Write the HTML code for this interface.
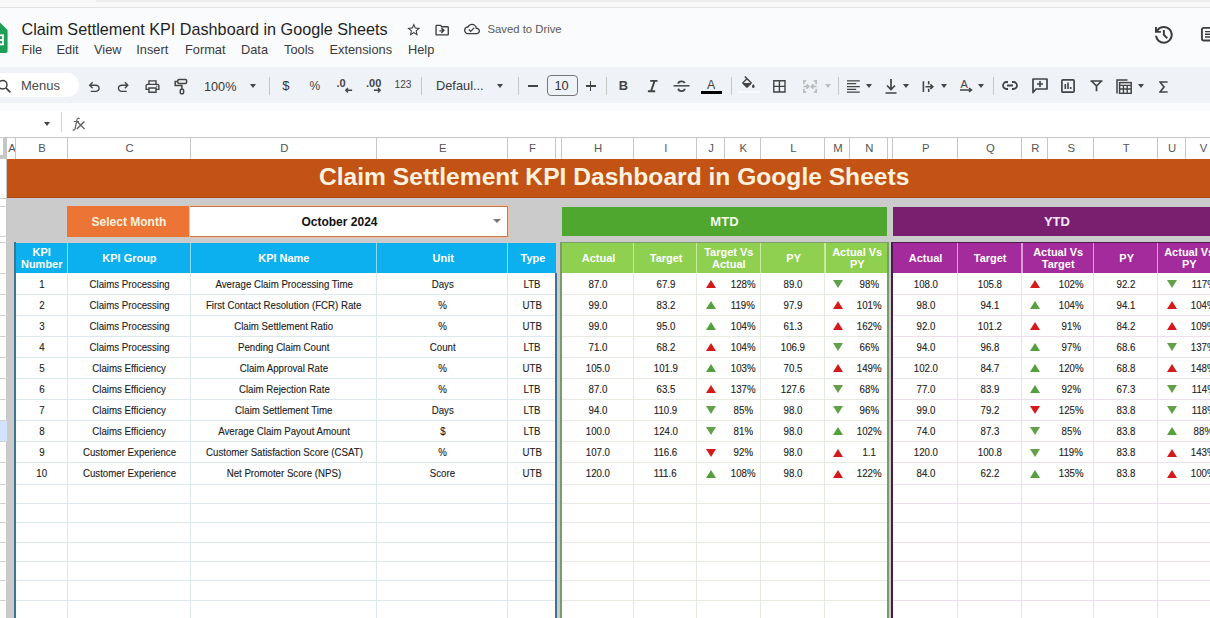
<!DOCTYPE html>
<html><head><meta charset="utf-8"><style>
*{margin:0;padding:0;box-sizing:border-box}
html,body{width:1210px;height:618px;overflow:hidden;background:#f9fbfd;font-family:"Liberation Sans",sans-serif;}
#root{position:relative;width:1210px;height:618px;overflow:hidden}
.t{position:absolute;white-space:nowrap;line-height:1}
.c{display:flex;align-items:center;justify-content:center;text-align:center;white-space:nowrap;overflow:hidden}
.d{font-size:10.3px;color:#1c1c1c;padding-top:1px;padding-left:1.2px;-webkit-text-stroke:0.12px #1c1c1c}
.d span,.h span,.s span{display:inline-block;transform:scaleX(0.94)}
.h span{transform:scaleX(0.955)}
.h{font-size:11.5px;font-weight:bold;color:#fff;line-height:1.0;padding-top:1.5px;padding-left:1.5px}
.ic{position:absolute}
</style></head>
<body><div id="root">
<!-- top strip -->
<div style="position:absolute;left:0;top:0;width:1210px;height:7px;background:#f8f8f8"></div><div style="position:absolute;left:96px;top:0;width:1114px;height:1.5px;background:#ededed"></div>
<div style="position:absolute;left:0;top:6.5px;width:1210px;height:1px;background:#e3e3e3"></div>
<!-- sheets logo -->
<svg style="position:absolute;left:-15px;top:22.3px" width="23" height="31" viewBox="0 0 23 31">
  <path d="M0 2a2 2 0 0 1 2-2H14.6L22.6 8V29a2 2 0 0 1-2 2H2a2 2 0 0 1-2-2z" fill="#1d9f58"/>
  <rect x="7" y="13.3" width="10.9" height="9.1" fill="none" stroke="#fff" stroke-width="1.9"/>
  <path d="M7 18h10.9" stroke="#fff" stroke-width="1.8"/>
</svg>
<div class="t" style="left:21.5px;top:21px;font-size:16.2px;color:#1f1f1f">Claim Settlement KPI Dashboard in Google Sheets</div>
<!-- star -->
<svg style="position:absolute;left:405.8px;top:21.5px" width="15.6" height="15.6" viewBox="0 0 24 24"><path fill="#3c3c3c" d="M22 9.24l-7.190-.62L12 2 9.19 8.63 2 9.24l5.46 4.73L5.82 21 12 17.27 18.18 21l-1.63-7.03L22 9.24zM12 15.4l-3.76 2.27 1-4.28-3.32-2.880 4.38-.38L12 6.1l1.71 4.04 4.38.38-3.32 2.88 1 4.28L12 15.4z"/></svg>
<svg style="position:absolute;left:433.9px;top:21.6px" width="16.3" height="16.3" viewBox="0 0 24 24"><path fill="#3c3c3c" d="M20 6h-8l-2-2H4c-1.1 0-1.990.9-1.99 2L2 18c0 1.1.9 2 2 2h16c1.1 0 2-.9 2-2V8c0-1.1-.9-2-2-2zm0 12H4V6h5.17l2 2H20v10zm-8.16-6H8v2h3.84l-1.59 1.59L11.660 17 16 12.01 11.66 8l-1.41 1.41L11.84 12z"/></svg>
<svg style="position:absolute;left:464px;top:21.3px" width="16" height="16" viewBox="0 0 24 24"><path fill="#3c3c3c" d="M19.35 10.04C18.67 6.59 15.64 4 12 4 9.11 4 6.6 5.64 5.35 8.04 2.34 8.36 0 10.91 0 14c0 3.31 2.69 6 6 6h13c2.76 0 5-2.24 5-5 0-2.64-2.05-4.78-4.65-4.96zM19 18H6c-2.21 0-4-1.79-4-4 0-2.05 1.53-3.76 3.560-3.97l1.07-.11.5-.95C8.08 7.14 9.94 6 12 6c2.62 0 4.88 1.86 5.390 4.43l.3 1.5 1.53.11c1.56.1 2.78 1.41 2.78 2.96 0 1.65-1.35 3-3 3zm-9-3.82l-2.09-2.09L6.5 13.5 10 17l6.01-6.01-1.41-1.41z"/></svg>
<div class="t" style="left:487.5px;top:23.5px;font-size:11.3px;color:#5a5a5a">Saved to Drive</div>
<!-- history -->
<svg style="position:absolute;left:1152.1px;top:23.2px" width="23.7" height="23.7" viewBox="0 -960 960 960"><path fill="#3c3c3c" d="M480-120q-138 0-240.5-91.5T122-440h82q14 104 92.5 172T480-200q117 0 198.5-81.5T760-480q0-117-81.5-198.5T480-760q-69 0-129 32t-101 88h110v80H120v-240h80v94q51-64 124.5-99T480-840q75 0 140.5 28.5t114 77q48.5 48.5 77 114T840-480q0 75-28.5 140.5t-77 114q-48.5 48.5-114 77T480-120Zm112-192L440-464v-216h80v184l128 128-56 56Z"/></svg>
<svg style="position:absolute;left:1199.5px;top:26px" width="20" height="16" viewBox="0 0 20 16"><rect x="1.9" y="1.9" width="16" height="12.6" rx="1.8" fill="none" stroke="#3c3c3c" stroke-width="1.9"/><path d="M5 5.6h10M5 8.3h10M5 11h10" stroke="#3c3c3c" stroke-width="1.4"/></svg>
<!-- menu -->
<div class="t" style="left:21.5px;top:44.2px;font-size:12.8px;color:#3a3a3a">File</div>
<div class="t" style="left:56.5px;top:44.2px;font-size:12.8px;color:#3a3a3a">Edit</div>
<div class="t" style="left:94px;top:44.2px;font-size:12.8px;color:#3a3a3a">View</div>
<div class="t" style="left:136.3px;top:44.2px;font-size:12.8px;color:#3a3a3a">Insert</div>
<div class="t" style="left:185px;top:44.2px;font-size:12.8px;color:#3a3a3a">Format</div>
<div class="t" style="left:241px;top:44.2px;font-size:12.8px;color:#3a3a3a">Data</div>
<div class="t" style="left:284px;top:44.2px;font-size:12.8px;color:#3a3a3a">Tools</div>
<div class="t" style="left:329.5px;top:44.2px;font-size:12.8px;color:#3a3a3a">Extensions</div>
<div class="t" style="left:408px;top:44.2px;font-size:12.8px;color:#3a3a3a">Help</div>

<!-- toolbar -->
<div style="position:absolute;left:-20px;top:67.4px;width:1250px;height:36px;background:#eff2f7;border-radius:18px"></div>
<div style="position:absolute;left:-30px;top:73px;width:109px;height:24px;background:#fff;border-radius:12px"></div>
<svg style="position:absolute;left:-4.5px;top:77.5px" width="17" height="17" viewBox="0 0 24 24"><circle cx="9.5" cy="9.5" r="6" fill="none" stroke="#3c3c3c" stroke-width="2"/><path d="M14 14l6.3 6.3" stroke="#3c3c3c" stroke-width="2.2"/></svg>
<div class="t" style="left:20.9px;top:79px;font-size:13px;color:#4a4a4a">Menus</div>
<!-- undo / redo -->
<svg style="position:absolute;left:86.3px;top:79.2px" width="16.5" height="16.5" viewBox="0 -960 960 960"><path fill="#444" d="M280-200v-80h284q63 0 109.5-40T720-420q0-60-46.5-100T564-560H312l104 104-56 56-200-200 200-200 56 56-104 104h252q97 0 166.5 63T800-420q0 94-69.5 157T564-200H280Z"/></svg>
<svg style="position:absolute;left:115.2px;top:79.2px" width="16.5" height="16.5" viewBox="0 -960 960 960"><path fill="#444" d="M396-200q-97 0-166.5-63T160-420q0-94 69.5-157T396-640h252L544-744l56-56 200 200-200 200-56-56 104-104H396q-63 0-109.5 40T240-420q0 60 46.5 100T396-280h284v80H396Z"/></svg>
<!-- print -->
<svg style="position:absolute;left:143.5px;top:77.5px" width="17" height="17" viewBox="0 -960 960 960"><path fill="#444" d="M640-640v-120H320v120h-80v-200h480v200h-80Zm-480 80h640-640Zm560 100q17 0 28.5-11.5T760-500q0-17-11.5-28.5T720-540q-17 0-28.5 11.5T680-500q0 17 11.5 28.5T720-460Zm-80 260v-160H320v160h320Zm80 80H240v-160H80v-240q0-51 35-85.5t85-34.5h560q51 0 85.5 34.5T880-520v240H720v160Zm80-240v-160q0-17-11.5-28.5T760-560H200q-17 0-28.5 11.5T160-520v160h80v-80h480v80h80Z"/></svg>
<!-- paint format -->
<svg style="position:absolute;left:172px;top:77px" width="17" height="18" viewBox="172 77 17 18"><rect x="177.8" y="79.4" width="8.8" height="4" rx="1.2" fill="none" stroke="#444" stroke-width="1.5"/><path d="M177.8 81.4H175.2V85.5H181.9V89.3" fill="none" stroke="#444" stroke-width="1.5"/><rect x="180.3" y="89.3" width="3.3" height="4.4" rx="0.9" fill="none" stroke="#444" stroke-width="1.5"/></svg>
<div class="t" style="left:204px;top:80.6px;font-size:12.7px;color:#3a3a3a">100%</div>
<div class="t" style="left:249.5px;top:84px;width:0;height:0;border-left:3.5px solid transparent;border-right:3.5px solid transparent;border-top:4px solid #444"></div>
<div style="position:absolute;left:269px;top:77px;width:1px;height:18px;background:#c7c7c7"></div>
<div class="t" style="left:282.3px;top:79.3px;font-size:13px;color:#333">$</div>
<div class="t" style="left:309.5px;top:79.5px;font-size:12px;color:#444">%</div>
<div class="t" style="left:336.5px;top:77.5px;font-size:11px;font-weight:bold;color:#444">.0</div>
<svg style="position:absolute;left:343.5px;top:87px" width="9" height="6.5" viewBox="0 0 10 7"><path d="M9 3.5H2M4.5 1L2 3.5 4.5 6" fill="none" stroke="#444" stroke-width="1.6"/></svg>
<div class="t" style="left:366px;top:77.5px;font-size:11px;font-weight:bold;color:#444">.00</div>
<svg style="position:absolute;left:372.5px;top:87px" width="9" height="6.5" viewBox="0 0 10 7"><path d="M1 3.5h7M5.5 1L8 3.5 5.5 6" fill="none" stroke="#444" stroke-width="1.6"/></svg>
<div class="t" style="left:394.5px;top:79.8px;font-size:10.2px;color:#444">123</div>
<div style="position:absolute;left:421px;top:77px;width:1px;height:18px;background:#c7c7c7"></div>
<div class="t" style="left:436px;top:79.5px;font-size:12.8px;color:#3a3a3a">Defaul...</div>
<div class="t" style="left:496.5px;top:84px;width:0;height:0;border-left:3.5px solid transparent;border-right:3.5px solid transparent;border-top:4px solid #444"></div>
<div style="position:absolute;left:517.5px;top:77px;width:1px;height:18px;background:#c7c7c7"></div>
<div style="position:absolute;left:527.5px;top:85.2px;width:10px;height:1.4px;background:#444"></div>
<div style="position:absolute;left:546.8px;top:74.5px;width:31px;height:21.5px;border:1.2px solid #777;border-radius:4px"></div>
<div class="t" style="left:554.5px;top:79.5px;font-size:12.8px;color:#333">10</div>
<div style="position:absolute;left:585.5px;top:85.2px;width:10.5px;height:1.4px;background:#444"></div>
<div style="position:absolute;left:590px;top:80.6px;width:1.4px;height:10.5px;background:#444"></div>
<div style="position:absolute;left:606px;top:77px;width:1px;height:18px;background:#c7c7c7"></div>
<div class="t" style="left:618.8px;top:79.5px;font-size:12.8px;font-weight:bold;color:#444">B</div>
<svg style="position:absolute;left:646px;top:79px" width="13" height="14" viewBox="0 0 13 14"><path d="M4.2 1.9h7.3M1.9 12.3h7.3M8.6 1.9L5 12.3" fill="none" stroke="#444" stroke-width="1.9"/></svg>
<svg style="position:absolute;left:673px;top:79.5px" width="17" height="13" viewBox="0 0 17 13"><path d="M0.5 5.8h16" stroke="#444" stroke-width="1.5"/><path d="M5.2 3.6C5.5 0.6 11.2 0.6 11.6 3.2M5.3 8.6c0.4 3.2 6.2 3.4 6.4 0.2" fill="none" stroke="#444" stroke-width="1.8"/></svg>
<div class="t" style="left:707px;top:78.5px;font-size:12.3px;color:#444">A</div>
<div style="position:absolute;left:701px;top:91px;width:21px;height:3px;background:#000"></div>
<div style="position:absolute;left:730.5px;top:77px;width:1px;height:18px;background:#c7c7c7"></div>
<svg style="position:absolute;left:739.7px;top:75.5px" width="16.8" height="16.8" viewBox="0 0 24 24"><path fill="#444" d="M16.56 8.94L7.62 0 6.21 1.41l2.38 2.38-5.150 5.15c-.59.59-.59 1.54 0 2.12l5.5 5.5c.29.29.68.44 1.06.44s.77-.15 1.06-.44l5.5-5.5c.59-.58.59-1.53 0-2.12zM5.21 10L10 5.21 14.79 10H5.21zM19 11.5s-2 2.17-2 3.5c0 1.1.9 2 2 2s2-.9 2-2c0-1.33-2-3.5-2-3.5z"/></svg>
<div style="position:absolute;left:738px;top:90.6px;width:22px;height:2.6px;background:#fafbfd"></div>
<svg style="position:absolute;left:770.8px;top:77.9px" width="16.8" height="16.8" viewBox="0 0 24 24"><path fill="#444" d="M3 3v18h18V3H3zm8 16H5v-6h6v6zm0-8H5V5h6v6zm8 8h-6v-6h6v6zm0-8h-6V5h6v6z"/></svg>
<svg style="position:absolute;left:802.6px;top:79.6px" width="14" height="13" viewBox="0 0 14 13"><path d="M0.9 0v4.2M0.9 8.8v4.2M0 0.9h3.2M0 12.1h3.2M13.1 0v4.2M13.1 8.8v4.2M10.8 0.9h3.2M10.8 12.1h3.2M0.5 6.5h5.2M3.6 4.4l2.1 2.1-2.1 2.1M13.5 6.5H8.3M10.4 4.4L8.3 6.5l2.1 2.1" fill="none" stroke="#b8b8b8" stroke-width="1.5"/></svg>
<div class="t" style="left:825px;top:84px;width:0;height:0;border-left:3.5px solid transparent;border-right:3.5px solid transparent;border-top:4px solid #bdbdbd"></div>
<div style="position:absolute;left:837.5px;top:77px;width:1px;height:18px;background:#c7c7c7"></div>
<svg style="position:absolute;left:847px;top:79.6px" width="13" height="13" viewBox="0 0 13 13"><path d="M0 0.8h12.8M0 3.7h9.2M0 6.5h12.8M0 9.3h9.2M0 12.2h12.8" stroke="#444" stroke-width="1.25"/></svg>
<div class="t" style="left:866px;top:84px;width:0;height:0;border-left:3.5px solid transparent;border-right:3.5px solid transparent;border-top:4px solid #444"></div>
<svg style="position:absolute;left:884.5px;top:78.5px" width="12" height="15" viewBox="0 0 12 15"><path d="M6 0v10M2 6.5L6 10.5 10 6.5M0.5 14h11" fill="none" stroke="#444" stroke-width="1.7"/></svg>
<div class="t" style="left:903.3px;top:84px;width:0;height:0;border-left:3.5px solid transparent;border-right:3.5px solid transparent;border-top:4px solid #444"></div>
<svg style="position:absolute;left:921.8px;top:80.6px" width="13" height="11.5" viewBox="0 0 13 11.5"><path d="M1.4 0.3v10.9M6.7 0v3.6M6.7 7.8v3.6M3.5 5.7h7.2M8.4 3.4l2.4 2.3-2.4 2.3" fill="none" stroke="#444" stroke-width="1.6"/></svg>
<div class="t" style="left:940.5px;top:84px;width:0;height:0;border-left:3.5px solid transparent;border-right:3.5px solid transparent;border-top:4px solid #444"></div>
<div class="t" style="left:960.5px;top:78.6px;font-size:11px;color:#444">A</div>
<svg style="position:absolute;left:960px;top:86.8px" width="13" height="6" viewBox="0 0 13 6"><path d="M0 3h11M9 1l2.5 2L9 5" fill="none" stroke="#444" stroke-width="1.5"/></svg>
<div class="t" style="left:977.7px;top:84px;width:0;height:0;border-left:3.5px solid transparent;border-right:3.5px solid transparent;border-top:4px solid #444"></div>
<div style="position:absolute;left:992.5px;top:77px;width:1px;height:18px;background:#c7c7c7"></div>
<svg style="position:absolute;left:1002px;top:80px" width="16" height="11" viewBox="0 0 16 11"><path d="M6 2H4.5a3.5 3.5 0 0 0 0 7H6M10 2h1.5a3.5 3.5 0 0 1 0 7H10M5 5.5h6" fill="none" stroke="#444" stroke-width="1.8"/></svg>
<svg style="position:absolute;left:1031.5px;top:78px" width="16" height="16" viewBox="0 0 16 16"><path d="M1 1h14v10H4l-3 3.5z" fill="none" stroke="#444" stroke-width="1.7" stroke-linejoin="round"/><path d="M8 3v6M5 6h6" stroke="#444" stroke-width="1.7"/></svg>
<svg style="position:absolute;left:1061px;top:79px" width="14" height="14" viewBox="0 0 14 14"><rect x="0.9" y="0.9" width="12.2" height="12.2" rx="1" fill="none" stroke="#444" stroke-width="1.7"/><path d="M4.3 5v5M7 3.5v6.5M9.7 8v2" stroke="#444" stroke-width="1.6"/></svg>
<svg style="position:absolute;left:1090.3px;top:80.3px" width="13" height="11.5" viewBox="0 0 13 11.5"><path d="M0.5 1h12M1.5 1l5 5M11.5 1l-5 5M6.5 5.5v5.8" fill="none" stroke="#444" stroke-width="1.7"/></svg>
<svg style="position:absolute;left:1116px;top:79px" width="16" height="15" viewBox="0 0 16 15"><path d="M1 14.5V1h10.5" fill="none" stroke="#444" stroke-width="1.5"/><rect x="3.6" y="3.6" width="11.6" height="10.8" fill="none" stroke="#444" stroke-width="1.5"/><path d="M3.6 6.4h11.6M3.6 10h11.6M7.4 6.4v8M11.2 6.4v8" stroke="#444" stroke-width="1.4"/></svg>
<div class="t" style="left:1137.7px;top:84px;width:0;height:0;border-left:3.5px solid transparent;border-right:3.5px solid transparent;border-top:4px solid #444"></div>
<svg style="position:absolute;left:1158.8px;top:80.6px" width="9" height="12" viewBox="0 0 9 12"><path d="M8.6 1H1l4 5-4 5h7.6" fill="none" stroke="#444" stroke-width="1.7"/></svg>

<!-- formula bar -->
<div style="position:absolute;left:0;top:111.3px;width:1210px;height:26px;background:#fff"></div>
<div class="t" style="left:43.8px;top:121.5px;width:0;height:0;border-left:3.5px solid transparent;border-right:3.5px solid transparent;border-top:4px solid #444"></div>
<div style="position:absolute;left:60.8px;top:112.3px;width:1px;height:19.5px;background:#d5d5d5"></div>
<svg style="position:absolute;left:71px;top:116.5px" width="15" height="14" viewBox="71 116.5 15 14"><path d="M79.6 118.3C78.6 117.3 77.4 117.6 77 119.2L75.1 128C74.7 129.6 73.6 130 72.6 129.3M73.8 121H79" fill="none" stroke="#606060" stroke-width="1.2"/><path d="M77.2 121L84.6 128.6M84.4 121L76.8 128.6" fill="none" stroke="#606060" stroke-width="1.35"/></svg>

<div style="position:absolute;left:0.0px;top:137.2px;width:1210.0px;height:480.8px;background:#fff"></div><div style="position:absolute;left:7.0px;top:158.6px;width:1203.0px;height:459.4px;background:#cbcbcb"></div><div style="position:absolute;left:0.0px;top:136.7px;width:1210.0px;height:1.0px;background:#c7c7c7"></div><div style="position:absolute;left:7.5px;top:137.7px;width:8.4px;height:20.9px;border-right:1px solid #c7c7c7;color:#555;font-size:11.3px"><div class="c" style="width:100%;height:100%;padding-left:1.5px;padding-top:0.5px">A</div></div><div style="position:absolute;left:15.9px;top:137.7px;width:52.0px;height:20.9px;border-right:1px solid #c7c7c7;color:#555;font-size:11.3px"><div class="c" style="width:100%;height:100%;padding-left:1.5px;padding-top:0.5px">B</div></div><div style="position:absolute;left:67.9px;top:137.7px;width:123.0px;height:20.9px;border-right:1px solid #c7c7c7;color:#555;font-size:11.3px"><div class="c" style="width:100%;height:100%;padding-left:1.5px;padding-top:0.5px">C</div></div><div style="position:absolute;left:190.9px;top:137.7px;width:186.3px;height:20.9px;border-right:1px solid #c7c7c7;color:#555;font-size:11.3px"><div class="c" style="width:100%;height:100%;padding-left:1.5px;padding-top:0.5px">D</div></div><div style="position:absolute;left:377.2px;top:137.7px;width:130.9px;height:20.9px;border-right:1px solid #c7c7c7;color:#555;font-size:11.3px"><div class="c" style="width:100%;height:100%;padding-left:1.5px;padding-top:0.5px">E</div></div><div style="position:absolute;left:508.1px;top:137.7px;width:48.4px;height:20.9px;border-right:1px solid #c7c7c7;color:#555;font-size:11.3px"><div class="c" style="width:100%;height:100%;padding-left:1.5px;padding-top:0.5px">F</div></div><div style="position:absolute;left:556.5px;top:137.7px;width:5.3px;height:20.9px;border-right:1px solid #c7c7c7;color:#555;font-size:11.3px"><div class="c" style="width:100%;height:100%;padding-left:1.5px;padding-top:0.5px"></div></div><div style="position:absolute;left:561.8px;top:137.7px;width:72.3px;height:20.9px;border-right:1px solid #c7c7c7;color:#555;font-size:11.3px"><div class="c" style="width:100%;height:100%;padding-left:1.5px;padding-top:0.5px">H</div></div><div style="position:absolute;left:634.1px;top:137.7px;width:62.8px;height:20.9px;border-right:1px solid #c7c7c7;color:#555;font-size:11.3px"><div class="c" style="width:100%;height:100%;padding-left:1.5px;padding-top:0.5px">I</div></div><div style="position:absolute;left:696.9px;top:137.7px;width:28.1px;height:20.9px;border-right:1px solid #c7c7c7;color:#555;font-size:11.3px"><div class="c" style="width:100%;height:100%;padding-left:1.5px;padding-top:0.5px">J</div></div><div style="position:absolute;left:725.0px;top:137.7px;width:35.9px;height:20.9px;border-right:1px solid #c7c7c7;color:#555;font-size:11.3px"><div class="c" style="width:100%;height:100%;padding-left:1.5px;padding-top:0.5px">K</div></div><div style="position:absolute;left:760.9px;top:137.7px;width:64.5px;height:20.9px;border-right:1px solid #c7c7c7;color:#555;font-size:11.3px"><div class="c" style="width:100%;height:100%;padding-left:1.5px;padding-top:0.5px">L</div></div><div style="position:absolute;left:825.4px;top:137.7px;width:24.6px;height:20.9px;border-right:1px solid #c7c7c7;color:#555;font-size:11.3px"><div class="c" style="width:100%;height:100%;padding-left:1.5px;padding-top:0.5px">M</div></div><div style="position:absolute;left:850.0px;top:137.7px;width:38.1px;height:20.9px;border-right:1px solid #c7c7c7;color:#555;font-size:11.3px"><div class="c" style="width:100%;height:100%;padding-left:1.5px;padding-top:0.5px">N</div></div><div style="position:absolute;left:888.1px;top:137.7px;width:4.8px;height:20.9px;border-right:1px solid #c7c7c7;color:#555;font-size:11.3px"><div class="c" style="width:100%;height:100%;padding-left:1.5px;padding-top:0.5px"></div></div><div style="position:absolute;left:892.9px;top:137.7px;width:65.2px;height:20.9px;border-right:1px solid #c7c7c7;color:#555;font-size:11.3px"><div class="c" style="width:100%;height:100%;padding-left:1.5px;padding-top:0.5px">P</div></div><div style="position:absolute;left:958.1px;top:137.7px;width:64.2px;height:20.9px;border-right:1px solid #c7c7c7;color:#555;font-size:11.3px"><div class="c" style="width:100%;height:100%;padding-left:1.5px;padding-top:0.5px">Q</div></div><div style="position:absolute;left:1022.3px;top:137.7px;width:25.5px;height:20.9px;border-right:1px solid #c7c7c7;color:#555;font-size:11.3px"><div class="c" style="width:100%;height:100%;padding-left:1.5px;padding-top:0.5px">R</div></div><div style="position:absolute;left:1047.8px;top:137.7px;width:46.3px;height:20.9px;border-right:1px solid #c7c7c7;color:#555;font-size:11.3px"><div class="c" style="width:100%;height:100%;padding-left:1.5px;padding-top:0.5px">S</div></div><div style="position:absolute;left:1094.1px;top:137.7px;width:63.7px;height:20.9px;border-right:1px solid #c7c7c7;color:#555;font-size:11.3px"><div class="c" style="width:100%;height:100%;padding-left:1.5px;padding-top:0.5px">T</div></div><div style="position:absolute;left:1157.8px;top:137.7px;width:28.2px;height:20.9px;border-right:1px solid #c7c7c7;color:#555;font-size:11.3px"><div class="c" style="width:100%;height:100%;padding-left:1.5px;padding-top:0.5px">U</div></div><div style="position:absolute;left:1186.0px;top:137.7px;width:34.5px;height:20.9px;border-right:1px solid #c7c7c7;color:#555;font-size:11.3px"><div class="c" style="width:100%;height:100%;padding-left:1.5px;padding-top:0.5px">V</div></div><div style="position:absolute;left:0.0px;top:137.7px;width:7.0px;height:480.3px;background:#fff;border-right:1px solid #c7c7c7"></div><div style="position:absolute;left:3.2px;top:137.7px;width:3.4px;height:20.9px;background:#c6c6c6"></div><div style="position:absolute;left:0.0px;top:154.6px;width:6.6px;height:4.0px;background:#c6c6c6"></div><div style="position:absolute;left:0.0px;top:420.7px;width:6.5px;height:21.1px;background:#d3e3fd"></div><div style="position:absolute;left:0.0px;top:198.0px;width:7.0px;height:1.0px;background:#d0d0d0"></div><div style="position:absolute;left:0.0px;top:205.8px;width:7.0px;height:1.0px;background:#d0d0d0"></div><div style="position:absolute;left:0.0px;top:236.3px;width:7.0px;height:1.0px;background:#d0d0d0"></div><div style="position:absolute;left:0.0px;top:242.1px;width:7.0px;height:1.0px;background:#d0d0d0"></div><div style="position:absolute;left:0.0px;top:272.5px;width:7.0px;height:1.0px;background:#d0d0d0"></div><div style="position:absolute;left:0.0px;top:293.6px;width:7.0px;height:1.0px;background:#d0d0d0"></div><div style="position:absolute;left:0.0px;top:314.7px;width:7.0px;height:1.0px;background:#d0d0d0"></div><div style="position:absolute;left:0.0px;top:335.8px;width:7.0px;height:1.0px;background:#d0d0d0"></div><div style="position:absolute;left:0.0px;top:356.9px;width:7.0px;height:1.0px;background:#d0d0d0"></div><div style="position:absolute;left:0.0px;top:378.0px;width:7.0px;height:1.0px;background:#d0d0d0"></div><div style="position:absolute;left:0.0px;top:399.1px;width:7.0px;height:1.0px;background:#d0d0d0"></div><div style="position:absolute;left:0.0px;top:420.2px;width:7.0px;height:1.0px;background:#d0d0d0"></div><div style="position:absolute;left:0.0px;top:441.3px;width:7.0px;height:1.0px;background:#d0d0d0"></div><div style="position:absolute;left:0.0px;top:462.4px;width:7.0px;height:1.0px;background:#d0d0d0"></div><div style="position:absolute;left:0.0px;top:483.5px;width:7.0px;height:1.0px;background:#d0d0d0"></div><div style="position:absolute;left:0.0px;top:502.9px;width:7.0px;height:1.0px;background:#d0d0d0"></div><div style="position:absolute;left:0.0px;top:522.2px;width:7.0px;height:1.0px;background:#d0d0d0"></div><div style="position:absolute;left:0.0px;top:541.5px;width:7.0px;height:1.0px;background:#d0d0d0"></div><div style="position:absolute;left:0.0px;top:560.9px;width:7.0px;height:1.0px;background:#d0d0d0"></div><div style="position:absolute;left:0.0px;top:580.2px;width:7.0px;height:1.0px;background:#d0d0d0"></div><div style="position:absolute;left:0.0px;top:599.6px;width:7.0px;height:1.0px;background:#d0d0d0"></div><div style="position:absolute;left:0.0px;top:619.0px;width:7.0px;height:1.0px;background:#d0d0d0"></div><div style="position:absolute;left:7.0px;top:158.6px;width:1203.0px;height:39.9px;background:#c25315;border-bottom:1px solid #a9471a"></div><div class="t" style="left:319px;top:166.3px;font-size:24.6px;font-weight:bold;color:#fdf1df;transform:scaleY(0.95);transform-origin:0 0">Claim Settlement KPI Dashboard in Google Sheets</div><div style="position:absolute;left:67.4px;top:206.3px;width:123.0px;height:30.5px;background:#ec7535;color:#fdf1df;font-size:12px;font-weight:bold"><div class="c" style="width:100%;height:100%">Select Month</div></div><div style="position:absolute;left:190.4px;top:206.3px;width:317.2px;height:30.5px;background:#fff;border:1.2px solid #c27a50;border-left:none;box-shadow:0 0 0 1px #efc0a0;font-size:12px;font-weight:bold;color:#111"><div class="c" style="width:100%;height:100%;padding-right:18px">October 2024</div></div><div class="t" style="left:493px;top:219px;width:0;height:0;border-left:4px solid transparent;border-right:4px solid transparent;border-top:4px solid #777"></div><div style="position:absolute;left:561.8px;top:207.3px;width:325.3px;height:29.0px;background:#4fa72f;color:#f3fbe9;font-size:13px;font-weight:bold"><div class="c" style="width:100%;height:100%">MTD</div></div><div style="position:absolute;left:892.9px;top:207.3px;width:328.1px;height:29.0px;background:#7a1f70;color:#fbeaf8;font-size:13px;font-weight:bold"><div class="c" style="width:100%;height:100%">YTD</div></div><div style="position:absolute;left:15.4px;top:242.6px;width:52.0px;height:30.4px;background:#0db0ee"><div class="c h" style="width:100%;height:100%"><span>KPI<br>Number</span></div></div><div style="position:absolute;left:67.4px;top:242.6px;width:123.0px;height:30.4px;background:#0db0ee"><div class="c h" style="width:100%;height:100%"><span>KPI Group</span></div></div><div style="position:absolute;left:190.4px;top:242.6px;width:186.3px;height:30.4px;background:#0db0ee"><div class="c h" style="width:100%;height:100%"><span>KPI Name</span></div></div><div style="position:absolute;left:376.7px;top:242.6px;width:130.9px;height:30.4px;background:#0db0ee"><div class="c h" style="width:100%;height:100%"><span>Unit</span></div></div><div style="position:absolute;left:507.6px;top:242.6px;width:48.4px;height:30.4px;background:#0db0ee"><div class="c h" style="width:100%;height:100%"><span>Type</span></div></div><div style="position:absolute;left:561.3px;top:242.6px;width:72.3px;height:30.4px;background:#8fd050"><div class="c h" style="width:100%;height:100%"><span>Actual</span></div></div><div style="position:absolute;left:633.6px;top:242.6px;width:62.8px;height:30.4px;background:#8fd050"><div class="c h" style="width:100%;height:100%"><span>Target</span></div></div><div style="position:absolute;left:696.4px;top:242.6px;width:64.0px;height:30.4px;background:#8fd050"><div class="c h" style="width:100%;height:100%"><span>Target Vs<br>Actual</span></div></div><div style="position:absolute;left:760.4px;top:242.6px;width:64.5px;height:30.4px;background:#8fd050"><div class="c h" style="width:100%;height:100%"><span>PY</span></div></div><div style="position:absolute;left:824.9px;top:242.6px;width:62.7px;height:30.4px;background:#8fd050"><div class="c h" style="width:100%;height:100%"><span>Actual Vs<br>PY</span></div></div><div style="position:absolute;left:892.4px;top:242.6px;width:65.2px;height:30.4px;background:#a42b9c"><div class="c h" style="width:100%;height:100%"><span>Actual</span></div></div><div style="position:absolute;left:957.6px;top:242.6px;width:64.2px;height:30.4px;background:#a42b9c"><div class="c h" style="width:100%;height:100%"><span>Target</span></div></div><div style="position:absolute;left:1021.8px;top:242.6px;width:71.8px;height:30.4px;background:#a42b9c"><div class="c h" style="width:100%;height:100%"><span>Actual Vs<br>Target</span></div></div><div style="position:absolute;left:1093.6px;top:242.6px;width:63.7px;height:30.4px;background:#a42b9c"><div class="c h" style="width:100%;height:100%"><span>PY</span></div></div><div style="position:absolute;left:1157.3px;top:242.6px;width:62.7px;height:30.4px;background:#a42b9c"><div class="c h" style="width:100%;height:100%"><span>Actual Vs<br>PY</span></div></div><div style="position:absolute;left:66.7px;top:242.6px;width:1.5px;height:30.4px;background:#8fdaf7"></div><div style="position:absolute;left:189.7px;top:242.6px;width:1.5px;height:30.4px;background:#8fdaf7"></div><div style="position:absolute;left:375.9px;top:242.6px;width:1.5px;height:30.4px;background:#8fdaf7"></div><div style="position:absolute;left:506.9px;top:242.6px;width:1.5px;height:30.4px;background:#8fdaf7"></div><div style="position:absolute;left:632.9px;top:242.6px;width:1.5px;height:30.4px;background:#c6ec9e"></div><div style="position:absolute;left:695.6px;top:242.6px;width:1.5px;height:30.4px;background:#c6ec9e"></div><div style="position:absolute;left:759.6px;top:242.6px;width:1.5px;height:30.4px;background:#c6ec9e"></div><div style="position:absolute;left:824.1px;top:242.6px;width:1.5px;height:30.4px;background:#c6ec9e"></div><div style="position:absolute;left:956.9px;top:242.6px;width:1.5px;height:30.4px;background:#dc9ad6"></div><div style="position:absolute;left:1021.0px;top:242.6px;width:1.5px;height:30.4px;background:#dc9ad6"></div><div style="position:absolute;left:1092.8px;top:242.6px;width:1.5px;height:30.4px;background:#dc9ad6"></div><div style="position:absolute;left:1156.5px;top:242.6px;width:1.5px;height:30.4px;background:#dc9ad6"></div><div style="position:absolute;left:15.4px;top:273.0px;width:540.6px;height:345.0px;background:#fff"></div><div style="position:absolute;left:561.3px;top:273.0px;width:326.3px;height:345.0px;background:#fff"></div><div style="position:absolute;left:892.4px;top:273.0px;width:327.6px;height:345.0px;background:#fff"></div><div style="position:absolute;left:15.4px;top:273.0px;width:52.0px;height:21.1px;"><div class="c d" style="width:100%;height:100%"><span>1</span></div></div><div style="position:absolute;left:67.4px;top:273.0px;width:123.0px;height:21.1px;"><div class="c d" style="width:100%;height:100%"><span>Claims Processing</span></div></div><div style="position:absolute;left:190.4px;top:273.0px;width:186.3px;height:21.1px;"><div class="c d" style="width:100%;height:100%"><span>Average Claim Processing Time</span></div></div><div style="position:absolute;left:376.7px;top:273.0px;width:130.9px;height:21.1px;"><div class="c d" style="width:100%;height:100%"><span>Days</span></div></div><div style="position:absolute;left:507.6px;top:273.0px;width:48.4px;height:21.1px;"><div class="c d" style="width:100%;height:100%"><span>LTB</span></div></div><div style="position:absolute;left:561.3px;top:273.0px;width:72.3px;height:21.1px;"><div class="c d" style="width:100%;height:100%"><span>87.0</span></div></div><div style="position:absolute;left:633.6px;top:273.0px;width:62.8px;height:21.1px;"><div class="c d" style="width:100%;height:100%"><span>67.9</span></div></div><div class="ic" style="left:705.9px;top:279.8px;width:0;height:0;border-left:5px solid transparent;border-right:5px solid transparent;border-bottom:8.7px solid #d41a1a"></div><div style="position:absolute;left:724.5px;top:273.0px;width:35.9px;height:21.1px;"><div class="c d" style="width:100%;height:100%"><span>128%</span></div></div><div style="position:absolute;left:760.4px;top:273.0px;width:64.5px;height:21.1px;"><div class="c d" style="width:100%;height:100%"><span>89.0</span></div></div><div class="ic" style="left:832.6px;top:279.8px;width:0;height:0;border-left:5px solid transparent;border-right:5px solid transparent;border-top:8.7px solid #62a04a"></div><div style="position:absolute;left:849.5px;top:273.0px;width:38.1px;height:21.1px;"><div class="c d" style="width:100%;height:100%"><span>98%</span></div></div><div style="position:absolute;left:892.4px;top:273.0px;width:65.2px;height:21.1px;"><div class="c d" style="width:100%;height:100%"><span>108.0</span></div></div><div style="position:absolute;left:957.6px;top:273.0px;width:64.2px;height:21.1px;"><div class="c d" style="width:100%;height:100%"><span>105.8</span></div></div><div class="ic" style="left:1030.0px;top:279.8px;width:0;height:0;border-left:5px solid transparent;border-right:5px solid transparent;border-bottom:8.7px solid #d41a1a"></div><div style="position:absolute;left:1047.3px;top:273.0px;width:46.3px;height:21.1px;"><div class="c d" style="width:100%;height:100%"><span>102%</span></div></div><div style="position:absolute;left:1093.6px;top:273.0px;width:63.7px;height:21.1px;"><div class="c d" style="width:100%;height:100%"><span>92.2</span></div></div><div class="ic" style="left:1166.8px;top:279.8px;width:0;height:0;border-left:5px solid transparent;border-right:5px solid transparent;border-top:8.7px solid #62a04a"></div><div style="position:absolute;left:1185.5px;top:273.0px;width:34.5px;height:21.1px;"><div class="c d" style="width:100%;height:100%"><span>117%</span></div></div><div style="position:absolute;left:15.4px;top:294.1px;width:52.0px;height:21.1px;"><div class="c d" style="width:100%;height:100%"><span>2</span></div></div><div style="position:absolute;left:67.4px;top:294.1px;width:123.0px;height:21.1px;"><div class="c d" style="width:100%;height:100%"><span>Claims Processing</span></div></div><div style="position:absolute;left:190.4px;top:294.1px;width:186.3px;height:21.1px;"><div class="c d" style="width:100%;height:100%"><span>First Contact Resolution (FCR) Rate</span></div></div><div style="position:absolute;left:376.7px;top:294.1px;width:130.9px;height:21.1px;"><div class="c d" style="width:100%;height:100%"><span>%</span></div></div><div style="position:absolute;left:507.6px;top:294.1px;width:48.4px;height:21.1px;"><div class="c d" style="width:100%;height:100%"><span>UTB</span></div></div><div style="position:absolute;left:561.3px;top:294.1px;width:72.3px;height:21.1px;"><div class="c d" style="width:100%;height:100%"><span>99.0</span></div></div><div style="position:absolute;left:633.6px;top:294.1px;width:62.8px;height:21.1px;"><div class="c d" style="width:100%;height:100%"><span>83.2</span></div></div><div class="ic" style="left:705.9px;top:300.8px;width:0;height:0;border-left:5px solid transparent;border-right:5px solid transparent;border-bottom:8.7px solid #55a03e"></div><div style="position:absolute;left:724.5px;top:294.1px;width:35.9px;height:21.1px;"><div class="c d" style="width:100%;height:100%"><span>119%</span></div></div><div style="position:absolute;left:760.4px;top:294.1px;width:64.5px;height:21.1px;"><div class="c d" style="width:100%;height:100%"><span>97.9</span></div></div><div class="ic" style="left:832.6px;top:300.8px;width:0;height:0;border-left:5px solid transparent;border-right:5px solid transparent;border-bottom:8.7px solid #d41a1a"></div><div style="position:absolute;left:849.5px;top:294.1px;width:38.1px;height:21.1px;"><div class="c d" style="width:100%;height:100%"><span>101%</span></div></div><div style="position:absolute;left:892.4px;top:294.1px;width:65.2px;height:21.1px;"><div class="c d" style="width:100%;height:100%"><span>98.0</span></div></div><div style="position:absolute;left:957.6px;top:294.1px;width:64.2px;height:21.1px;"><div class="c d" style="width:100%;height:100%"><span>94.1</span></div></div><div class="ic" style="left:1030.0px;top:300.8px;width:0;height:0;border-left:5px solid transparent;border-right:5px solid transparent;border-bottom:8.7px solid #55a03e"></div><div style="position:absolute;left:1047.3px;top:294.1px;width:46.3px;height:21.1px;"><div class="c d" style="width:100%;height:100%"><span>104%</span></div></div><div style="position:absolute;left:1093.6px;top:294.1px;width:63.7px;height:21.1px;"><div class="c d" style="width:100%;height:100%"><span>94.1</span></div></div><div class="ic" style="left:1166.8px;top:300.8px;width:0;height:0;border-left:5px solid transparent;border-right:5px solid transparent;border-bottom:8.7px solid #d41a1a"></div><div style="position:absolute;left:1185.5px;top:294.1px;width:34.5px;height:21.1px;"><div class="c d" style="width:100%;height:100%"><span>104%</span></div></div><div style="position:absolute;left:15.4px;top:315.2px;width:52.0px;height:21.1px;"><div class="c d" style="width:100%;height:100%"><span>3</span></div></div><div style="position:absolute;left:67.4px;top:315.2px;width:123.0px;height:21.1px;"><div class="c d" style="width:100%;height:100%"><span>Claims Processing</span></div></div><div style="position:absolute;left:190.4px;top:315.2px;width:186.3px;height:21.1px;"><div class="c d" style="width:100%;height:100%"><span>Claim Settlement Ratio</span></div></div><div style="position:absolute;left:376.7px;top:315.2px;width:130.9px;height:21.1px;"><div class="c d" style="width:100%;height:100%"><span>%</span></div></div><div style="position:absolute;left:507.6px;top:315.2px;width:48.4px;height:21.1px;"><div class="c d" style="width:100%;height:100%"><span>UTB</span></div></div><div style="position:absolute;left:561.3px;top:315.2px;width:72.3px;height:21.1px;"><div class="c d" style="width:100%;height:100%"><span>99.0</span></div></div><div style="position:absolute;left:633.6px;top:315.2px;width:62.8px;height:21.1px;"><div class="c d" style="width:100%;height:100%"><span>95.0</span></div></div><div class="ic" style="left:705.9px;top:321.9px;width:0;height:0;border-left:5px solid transparent;border-right:5px solid transparent;border-bottom:8.7px solid #55a03e"></div><div style="position:absolute;left:724.5px;top:315.2px;width:35.9px;height:21.1px;"><div class="c d" style="width:100%;height:100%"><span>104%</span></div></div><div style="position:absolute;left:760.4px;top:315.2px;width:64.5px;height:21.1px;"><div class="c d" style="width:100%;height:100%"><span>61.3</span></div></div><div class="ic" style="left:832.6px;top:321.9px;width:0;height:0;border-left:5px solid transparent;border-right:5px solid transparent;border-bottom:8.7px solid #d41a1a"></div><div style="position:absolute;left:849.5px;top:315.2px;width:38.1px;height:21.1px;"><div class="c d" style="width:100%;height:100%"><span>162%</span></div></div><div style="position:absolute;left:892.4px;top:315.2px;width:65.2px;height:21.1px;"><div class="c d" style="width:100%;height:100%"><span>92.0</span></div></div><div style="position:absolute;left:957.6px;top:315.2px;width:64.2px;height:21.1px;"><div class="c d" style="width:100%;height:100%"><span>101.2</span></div></div><div class="ic" style="left:1030.0px;top:321.9px;width:0;height:0;border-left:5px solid transparent;border-right:5px solid transparent;border-bottom:8.7px solid #d41a1a"></div><div style="position:absolute;left:1047.3px;top:315.2px;width:46.3px;height:21.1px;"><div class="c d" style="width:100%;height:100%"><span>91%</span></div></div><div style="position:absolute;left:1093.6px;top:315.2px;width:63.7px;height:21.1px;"><div class="c d" style="width:100%;height:100%"><span>84.2</span></div></div><div class="ic" style="left:1166.8px;top:321.9px;width:0;height:0;border-left:5px solid transparent;border-right:5px solid transparent;border-bottom:8.7px solid #d41a1a"></div><div style="position:absolute;left:1185.5px;top:315.2px;width:34.5px;height:21.1px;"><div class="c d" style="width:100%;height:100%"><span>109%</span></div></div><div style="position:absolute;left:15.4px;top:336.3px;width:52.0px;height:21.1px;"><div class="c d" style="width:100%;height:100%"><span>4</span></div></div><div style="position:absolute;left:67.4px;top:336.3px;width:123.0px;height:21.1px;"><div class="c d" style="width:100%;height:100%"><span>Claims Processing</span></div></div><div style="position:absolute;left:190.4px;top:336.3px;width:186.3px;height:21.1px;"><div class="c d" style="width:100%;height:100%"><span>Pending Claim Count</span></div></div><div style="position:absolute;left:376.7px;top:336.3px;width:130.9px;height:21.1px;"><div class="c d" style="width:100%;height:100%"><span>Count</span></div></div><div style="position:absolute;left:507.6px;top:336.3px;width:48.4px;height:21.1px;"><div class="c d" style="width:100%;height:100%"><span>LTB</span></div></div><div style="position:absolute;left:561.3px;top:336.3px;width:72.3px;height:21.1px;"><div class="c d" style="width:100%;height:100%"><span>71.0</span></div></div><div style="position:absolute;left:633.6px;top:336.3px;width:62.8px;height:21.1px;"><div class="c d" style="width:100%;height:100%"><span>68.2</span></div></div><div class="ic" style="left:705.9px;top:343.1px;width:0;height:0;border-left:5px solid transparent;border-right:5px solid transparent;border-bottom:8.7px solid #d41a1a"></div><div style="position:absolute;left:724.5px;top:336.3px;width:35.9px;height:21.1px;"><div class="c d" style="width:100%;height:100%"><span>104%</span></div></div><div style="position:absolute;left:760.4px;top:336.3px;width:64.5px;height:21.1px;"><div class="c d" style="width:100%;height:100%"><span>106.9</span></div></div><div class="ic" style="left:832.6px;top:343.1px;width:0;height:0;border-left:5px solid transparent;border-right:5px solid transparent;border-top:8.7px solid #62a04a"></div><div style="position:absolute;left:849.5px;top:336.3px;width:38.1px;height:21.1px;"><div class="c d" style="width:100%;height:100%"><span>66%</span></div></div><div style="position:absolute;left:892.4px;top:336.3px;width:65.2px;height:21.1px;"><div class="c d" style="width:100%;height:100%"><span>94.0</span></div></div><div style="position:absolute;left:957.6px;top:336.3px;width:64.2px;height:21.1px;"><div class="c d" style="width:100%;height:100%"><span>96.8</span></div></div><div class="ic" style="left:1030.0px;top:343.1px;width:0;height:0;border-left:5px solid transparent;border-right:5px solid transparent;border-bottom:8.7px solid #55a03e"></div><div style="position:absolute;left:1047.3px;top:336.3px;width:46.3px;height:21.1px;"><div class="c d" style="width:100%;height:100%"><span>97%</span></div></div><div style="position:absolute;left:1093.6px;top:336.3px;width:63.7px;height:21.1px;"><div class="c d" style="width:100%;height:100%"><span>68.6</span></div></div><div class="ic" style="left:1166.8px;top:343.1px;width:0;height:0;border-left:5px solid transparent;border-right:5px solid transparent;border-top:8.7px solid #62a04a"></div><div style="position:absolute;left:1185.5px;top:336.3px;width:34.5px;height:21.1px;"><div class="c d" style="width:100%;height:100%"><span>137%</span></div></div><div style="position:absolute;left:15.4px;top:357.4px;width:52.0px;height:21.1px;"><div class="c d" style="width:100%;height:100%"><span>5</span></div></div><div style="position:absolute;left:67.4px;top:357.4px;width:123.0px;height:21.1px;"><div class="c d" style="width:100%;height:100%"><span>Claims Efficiency</span></div></div><div style="position:absolute;left:190.4px;top:357.4px;width:186.3px;height:21.1px;"><div class="c d" style="width:100%;height:100%"><span>Claim Approval Rate</span></div></div><div style="position:absolute;left:376.7px;top:357.4px;width:130.9px;height:21.1px;"><div class="c d" style="width:100%;height:100%"><span>%</span></div></div><div style="position:absolute;left:507.6px;top:357.4px;width:48.4px;height:21.1px;"><div class="c d" style="width:100%;height:100%"><span>UTB</span></div></div><div style="position:absolute;left:561.3px;top:357.4px;width:72.3px;height:21.1px;"><div class="c d" style="width:100%;height:100%"><span>105.0</span></div></div><div style="position:absolute;left:633.6px;top:357.4px;width:62.8px;height:21.1px;"><div class="c d" style="width:100%;height:100%"><span>101.9</span></div></div><div class="ic" style="left:705.9px;top:364.1px;width:0;height:0;border-left:5px solid transparent;border-right:5px solid transparent;border-bottom:8.7px solid #55a03e"></div><div style="position:absolute;left:724.5px;top:357.4px;width:35.9px;height:21.1px;"><div class="c d" style="width:100%;height:100%"><span>103%</span></div></div><div style="position:absolute;left:760.4px;top:357.4px;width:64.5px;height:21.1px;"><div class="c d" style="width:100%;height:100%"><span>70.5</span></div></div><div class="ic" style="left:832.6px;top:364.1px;width:0;height:0;border-left:5px solid transparent;border-right:5px solid transparent;border-bottom:8.7px solid #d41a1a"></div><div style="position:absolute;left:849.5px;top:357.4px;width:38.1px;height:21.1px;"><div class="c d" style="width:100%;height:100%"><span>149%</span></div></div><div style="position:absolute;left:892.4px;top:357.4px;width:65.2px;height:21.1px;"><div class="c d" style="width:100%;height:100%"><span>102.0</span></div></div><div style="position:absolute;left:957.6px;top:357.4px;width:64.2px;height:21.1px;"><div class="c d" style="width:100%;height:100%"><span>84.7</span></div></div><div class="ic" style="left:1030.0px;top:364.1px;width:0;height:0;border-left:5px solid transparent;border-right:5px solid transparent;border-bottom:8.7px solid #55a03e"></div><div style="position:absolute;left:1047.3px;top:357.4px;width:46.3px;height:21.1px;"><div class="c d" style="width:100%;height:100%"><span>120%</span></div></div><div style="position:absolute;left:1093.6px;top:357.4px;width:63.7px;height:21.1px;"><div class="c d" style="width:100%;height:100%"><span>68.8</span></div></div><div class="ic" style="left:1166.8px;top:364.1px;width:0;height:0;border-left:5px solid transparent;border-right:5px solid transparent;border-bottom:8.7px solid #d41a1a"></div><div style="position:absolute;left:1185.5px;top:357.4px;width:34.5px;height:21.1px;"><div class="c d" style="width:100%;height:100%"><span>148%</span></div></div><div style="position:absolute;left:15.4px;top:378.5px;width:52.0px;height:21.1px;"><div class="c d" style="width:100%;height:100%"><span>6</span></div></div><div style="position:absolute;left:67.4px;top:378.5px;width:123.0px;height:21.1px;"><div class="c d" style="width:100%;height:100%"><span>Claims Efficiency</span></div></div><div style="position:absolute;left:190.4px;top:378.5px;width:186.3px;height:21.1px;"><div class="c d" style="width:100%;height:100%"><span>Claim Rejection Rate</span></div></div><div style="position:absolute;left:376.7px;top:378.5px;width:130.9px;height:21.1px;"><div class="c d" style="width:100%;height:100%"><span>%</span></div></div><div style="position:absolute;left:507.6px;top:378.5px;width:48.4px;height:21.1px;"><div class="c d" style="width:100%;height:100%"><span>LTB</span></div></div><div style="position:absolute;left:561.3px;top:378.5px;width:72.3px;height:21.1px;"><div class="c d" style="width:100%;height:100%"><span>87.0</span></div></div><div style="position:absolute;left:633.6px;top:378.5px;width:62.8px;height:21.1px;"><div class="c d" style="width:100%;height:100%"><span>63.5</span></div></div><div class="ic" style="left:705.9px;top:385.2px;width:0;height:0;border-left:5px solid transparent;border-right:5px solid transparent;border-bottom:8.7px solid #d41a1a"></div><div style="position:absolute;left:724.5px;top:378.5px;width:35.9px;height:21.1px;"><div class="c d" style="width:100%;height:100%"><span>137%</span></div></div><div style="position:absolute;left:760.4px;top:378.5px;width:64.5px;height:21.1px;"><div class="c d" style="width:100%;height:100%"><span>127.6</span></div></div><div class="ic" style="left:832.6px;top:385.2px;width:0;height:0;border-left:5px solid transparent;border-right:5px solid transparent;border-top:8.7px solid #62a04a"></div><div style="position:absolute;left:849.5px;top:378.5px;width:38.1px;height:21.1px;"><div class="c d" style="width:100%;height:100%"><span>68%</span></div></div><div style="position:absolute;left:892.4px;top:378.5px;width:65.2px;height:21.1px;"><div class="c d" style="width:100%;height:100%"><span>77.0</span></div></div><div style="position:absolute;left:957.6px;top:378.5px;width:64.2px;height:21.1px;"><div class="c d" style="width:100%;height:100%"><span>83.9</span></div></div><div class="ic" style="left:1030.0px;top:385.2px;width:0;height:0;border-left:5px solid transparent;border-right:5px solid transparent;border-bottom:8.7px solid #55a03e"></div><div style="position:absolute;left:1047.3px;top:378.5px;width:46.3px;height:21.1px;"><div class="c d" style="width:100%;height:100%"><span>92%</span></div></div><div style="position:absolute;left:1093.6px;top:378.5px;width:63.7px;height:21.1px;"><div class="c d" style="width:100%;height:100%"><span>67.3</span></div></div><div class="ic" style="left:1166.8px;top:385.2px;width:0;height:0;border-left:5px solid transparent;border-right:5px solid transparent;border-top:8.7px solid #62a04a"></div><div style="position:absolute;left:1185.5px;top:378.5px;width:34.5px;height:21.1px;"><div class="c d" style="width:100%;height:100%"><span>114%</span></div></div><div style="position:absolute;left:15.4px;top:399.6px;width:52.0px;height:21.1px;"><div class="c d" style="width:100%;height:100%"><span>7</span></div></div><div style="position:absolute;left:67.4px;top:399.6px;width:123.0px;height:21.1px;"><div class="c d" style="width:100%;height:100%"><span>Claims Efficiency</span></div></div><div style="position:absolute;left:190.4px;top:399.6px;width:186.3px;height:21.1px;"><div class="c d" style="width:100%;height:100%"><span>Claim Settlement Time</span></div></div><div style="position:absolute;left:376.7px;top:399.6px;width:130.9px;height:21.1px;"><div class="c d" style="width:100%;height:100%"><span>Days</span></div></div><div style="position:absolute;left:507.6px;top:399.6px;width:48.4px;height:21.1px;"><div class="c d" style="width:100%;height:100%"><span>LTB</span></div></div><div style="position:absolute;left:561.3px;top:399.6px;width:72.3px;height:21.1px;"><div class="c d" style="width:100%;height:100%"><span>94.0</span></div></div><div style="position:absolute;left:633.6px;top:399.6px;width:62.8px;height:21.1px;"><div class="c d" style="width:100%;height:100%"><span>110.9</span></div></div><div class="ic" style="left:705.9px;top:406.4px;width:0;height:0;border-left:5px solid transparent;border-right:5px solid transparent;border-top:8.7px solid #62a04a"></div><div style="position:absolute;left:724.5px;top:399.6px;width:35.9px;height:21.1px;"><div class="c d" style="width:100%;height:100%"><span>85%</span></div></div><div style="position:absolute;left:760.4px;top:399.6px;width:64.5px;height:21.1px;"><div class="c d" style="width:100%;height:100%"><span>98.0</span></div></div><div class="ic" style="left:832.6px;top:406.4px;width:0;height:0;border-left:5px solid transparent;border-right:5px solid transparent;border-top:8.7px solid #62a04a"></div><div style="position:absolute;left:849.5px;top:399.6px;width:38.1px;height:21.1px;"><div class="c d" style="width:100%;height:100%"><span>96%</span></div></div><div style="position:absolute;left:892.4px;top:399.6px;width:65.2px;height:21.1px;"><div class="c d" style="width:100%;height:100%"><span>99.0</span></div></div><div style="position:absolute;left:957.6px;top:399.6px;width:64.2px;height:21.1px;"><div class="c d" style="width:100%;height:100%"><span>79.2</span></div></div><div class="ic" style="left:1030.0px;top:406.4px;width:0;height:0;border-left:5px solid transparent;border-right:5px solid transparent;border-top:8.7px solid #d41a1a"></div><div style="position:absolute;left:1047.3px;top:399.6px;width:46.3px;height:21.1px;"><div class="c d" style="width:100%;height:100%"><span>125%</span></div></div><div style="position:absolute;left:1093.6px;top:399.6px;width:63.7px;height:21.1px;"><div class="c d" style="width:100%;height:100%"><span>83.8</span></div></div><div class="ic" style="left:1166.8px;top:406.4px;width:0;height:0;border-left:5px solid transparent;border-right:5px solid transparent;border-top:8.7px solid #62a04a"></div><div style="position:absolute;left:1185.5px;top:399.6px;width:34.5px;height:21.1px;"><div class="c d" style="width:100%;height:100%"><span>118%</span></div></div><div style="position:absolute;left:15.4px;top:420.7px;width:52.0px;height:21.1px;"><div class="c d" style="width:100%;height:100%"><span>8</span></div></div><div style="position:absolute;left:67.4px;top:420.7px;width:123.0px;height:21.1px;"><div class="c d" style="width:100%;height:100%"><span>Claims Efficiency</span></div></div><div style="position:absolute;left:190.4px;top:420.7px;width:186.3px;height:21.1px;"><div class="c d" style="width:100%;height:100%"><span>Average Claim Payout Amount</span></div></div><div style="position:absolute;left:376.7px;top:420.7px;width:130.9px;height:21.1px;"><div class="c d" style="width:100%;height:100%"><span>$</span></div></div><div style="position:absolute;left:507.6px;top:420.7px;width:48.4px;height:21.1px;"><div class="c d" style="width:100%;height:100%"><span>LTB</span></div></div><div style="position:absolute;left:561.3px;top:420.7px;width:72.3px;height:21.1px;"><div class="c d" style="width:100%;height:100%"><span>100.0</span></div></div><div style="position:absolute;left:633.6px;top:420.7px;width:62.8px;height:21.1px;"><div class="c d" style="width:100%;height:100%"><span>124.0</span></div></div><div class="ic" style="left:705.9px;top:427.4px;width:0;height:0;border-left:5px solid transparent;border-right:5px solid transparent;border-top:8.7px solid #62a04a"></div><div style="position:absolute;left:724.5px;top:420.7px;width:35.9px;height:21.1px;"><div class="c d" style="width:100%;height:100%"><span>81%</span></div></div><div style="position:absolute;left:760.4px;top:420.7px;width:64.5px;height:21.1px;"><div class="c d" style="width:100%;height:100%"><span>98.0</span></div></div><div class="ic" style="left:832.6px;top:427.4px;width:0;height:0;border-left:5px solid transparent;border-right:5px solid transparent;border-bottom:8.7px solid #55a03e"></div><div style="position:absolute;left:849.5px;top:420.7px;width:38.1px;height:21.1px;"><div class="c d" style="width:100%;height:100%"><span>102%</span></div></div><div style="position:absolute;left:892.4px;top:420.7px;width:65.2px;height:21.1px;"><div class="c d" style="width:100%;height:100%"><span>74.0</span></div></div><div style="position:absolute;left:957.6px;top:420.7px;width:64.2px;height:21.1px;"><div class="c d" style="width:100%;height:100%"><span>87.3</span></div></div><div class="ic" style="left:1030.0px;top:427.4px;width:0;height:0;border-left:5px solid transparent;border-right:5px solid transparent;border-top:8.7px solid #62a04a"></div><div style="position:absolute;left:1047.3px;top:420.7px;width:46.3px;height:21.1px;"><div class="c d" style="width:100%;height:100%"><span>85%</span></div></div><div style="position:absolute;left:1093.6px;top:420.7px;width:63.7px;height:21.1px;"><div class="c d" style="width:100%;height:100%"><span>83.8</span></div></div><div class="ic" style="left:1166.8px;top:427.4px;width:0;height:0;border-left:5px solid transparent;border-right:5px solid transparent;border-bottom:8.7px solid #55a03e"></div><div style="position:absolute;left:1185.5px;top:420.7px;width:34.5px;height:21.1px;"><div class="c d" style="width:100%;height:100%"><span>88%</span></div></div><div style="position:absolute;left:15.4px;top:441.8px;width:52.0px;height:21.1px;"><div class="c d" style="width:100%;height:100%"><span>9</span></div></div><div style="position:absolute;left:67.4px;top:441.8px;width:123.0px;height:21.1px;"><div class="c d" style="width:100%;height:100%"><span>Customer Experience</span></div></div><div style="position:absolute;left:190.4px;top:441.8px;width:186.3px;height:21.1px;"><div class="c d" style="width:100%;height:100%"><span>Customer Satisfaction Score (CSAT)</span></div></div><div style="position:absolute;left:376.7px;top:441.8px;width:130.9px;height:21.1px;"><div class="c d" style="width:100%;height:100%"><span>%</span></div></div><div style="position:absolute;left:507.6px;top:441.8px;width:48.4px;height:21.1px;"><div class="c d" style="width:100%;height:100%"><span>UTB</span></div></div><div style="position:absolute;left:561.3px;top:441.8px;width:72.3px;height:21.1px;"><div class="c d" style="width:100%;height:100%"><span>107.0</span></div></div><div style="position:absolute;left:633.6px;top:441.8px;width:62.8px;height:21.1px;"><div class="c d" style="width:100%;height:100%"><span>116.6</span></div></div><div class="ic" style="left:705.9px;top:448.6px;width:0;height:0;border-left:5px solid transparent;border-right:5px solid transparent;border-top:8.7px solid #d41a1a"></div><div style="position:absolute;left:724.5px;top:441.8px;width:35.9px;height:21.1px;"><div class="c d" style="width:100%;height:100%"><span>92%</span></div></div><div style="position:absolute;left:760.4px;top:441.8px;width:64.5px;height:21.1px;"><div class="c d" style="width:100%;height:100%"><span>98.0</span></div></div><div class="ic" style="left:832.6px;top:448.6px;width:0;height:0;border-left:5px solid transparent;border-right:5px solid transparent;border-bottom:8.7px solid #d41a1a"></div><div style="position:absolute;left:849.5px;top:441.8px;width:38.1px;height:21.1px;"><div class="c d" style="width:100%;height:100%"><span>1.1</span></div></div><div style="position:absolute;left:892.4px;top:441.8px;width:65.2px;height:21.1px;"><div class="c d" style="width:100%;height:100%"><span>120.0</span></div></div><div style="position:absolute;left:957.6px;top:441.8px;width:64.2px;height:21.1px;"><div class="c d" style="width:100%;height:100%"><span>100.8</span></div></div><div class="ic" style="left:1030.0px;top:448.6px;width:0;height:0;border-left:5px solid transparent;border-right:5px solid transparent;border-top:8.7px solid #62a04a"></div><div style="position:absolute;left:1047.3px;top:441.8px;width:46.3px;height:21.1px;"><div class="c d" style="width:100%;height:100%"><span>119%</span></div></div><div style="position:absolute;left:1093.6px;top:441.8px;width:63.7px;height:21.1px;"><div class="c d" style="width:100%;height:100%"><span>83.8</span></div></div><div class="ic" style="left:1166.8px;top:448.6px;width:0;height:0;border-left:5px solid transparent;border-right:5px solid transparent;border-bottom:8.7px solid #d41a1a"></div><div style="position:absolute;left:1185.5px;top:441.8px;width:34.5px;height:21.1px;"><div class="c d" style="width:100%;height:100%"><span>143%</span></div></div><div style="position:absolute;left:15.4px;top:462.9px;width:52.0px;height:21.1px;"><div class="c d" style="width:100%;height:100%"><span>10</span></div></div><div style="position:absolute;left:67.4px;top:462.9px;width:123.0px;height:21.1px;"><div class="c d" style="width:100%;height:100%"><span>Customer Experience</span></div></div><div style="position:absolute;left:190.4px;top:462.9px;width:186.3px;height:21.1px;"><div class="c d" style="width:100%;height:100%"><span>Net Promoter Score (NPS)</span></div></div><div style="position:absolute;left:376.7px;top:462.9px;width:130.9px;height:21.1px;"><div class="c d" style="width:100%;height:100%"><span>Score</span></div></div><div style="position:absolute;left:507.6px;top:462.9px;width:48.4px;height:21.1px;"><div class="c d" style="width:100%;height:100%"><span>UTB</span></div></div><div style="position:absolute;left:561.3px;top:462.9px;width:72.3px;height:21.1px;"><div class="c d" style="width:100%;height:100%"><span>120.0</span></div></div><div style="position:absolute;left:633.6px;top:462.9px;width:62.8px;height:21.1px;"><div class="c d" style="width:100%;height:100%"><span>111.6</span></div></div><div class="ic" style="left:705.9px;top:469.6px;width:0;height:0;border-left:5px solid transparent;border-right:5px solid transparent;border-bottom:8.7px solid #55a03e"></div><div style="position:absolute;left:724.5px;top:462.9px;width:35.9px;height:21.1px;"><div class="c d" style="width:100%;height:100%"><span>108%</span></div></div><div style="position:absolute;left:760.4px;top:462.9px;width:64.5px;height:21.1px;"><div class="c d" style="width:100%;height:100%"><span>98.0</span></div></div><div class="ic" style="left:832.6px;top:469.6px;width:0;height:0;border-left:5px solid transparent;border-right:5px solid transparent;border-bottom:8.7px solid #d41a1a"></div><div style="position:absolute;left:849.5px;top:462.9px;width:38.1px;height:21.1px;"><div class="c d" style="width:100%;height:100%"><span>122%</span></div></div><div style="position:absolute;left:892.4px;top:462.9px;width:65.2px;height:21.1px;"><div class="c d" style="width:100%;height:100%"><span>84.0</span></div></div><div style="position:absolute;left:957.6px;top:462.9px;width:64.2px;height:21.1px;"><div class="c d" style="width:100%;height:100%"><span>62.2</span></div></div><div class="ic" style="left:1030.0px;top:469.6px;width:0;height:0;border-left:5px solid transparent;border-right:5px solid transparent;border-bottom:8.7px solid #55a03e"></div><div style="position:absolute;left:1047.3px;top:462.9px;width:46.3px;height:21.1px;"><div class="c d" style="width:100%;height:100%"><span>135%</span></div></div><div style="position:absolute;left:1093.6px;top:462.9px;width:63.7px;height:21.1px;"><div class="c d" style="width:100%;height:100%"><span>83.8</span></div></div><div class="ic" style="left:1166.8px;top:469.6px;width:0;height:0;border-left:5px solid transparent;border-right:5px solid transparent;border-bottom:8.7px solid #d41a1a"></div><div style="position:absolute;left:1185.5px;top:462.9px;width:34.5px;height:21.1px;"><div class="c d" style="width:100%;height:100%"><span>100%</span></div></div><div style="position:absolute;left:15.4px;top:293.6px;width:540.6px;height:1.0px;background:#dbe8ec"></div><div style="position:absolute;left:15.4px;top:314.7px;width:540.6px;height:1.0px;background:#dbe8ec"></div><div style="position:absolute;left:15.4px;top:335.8px;width:540.6px;height:1.0px;background:#dbe8ec"></div><div style="position:absolute;left:15.4px;top:356.9px;width:540.6px;height:1.0px;background:#dbe8ec"></div><div style="position:absolute;left:15.4px;top:378.0px;width:540.6px;height:1.0px;background:#dbe8ec"></div><div style="position:absolute;left:15.4px;top:399.1px;width:540.6px;height:1.0px;background:#dbe8ec"></div><div style="position:absolute;left:15.4px;top:420.2px;width:540.6px;height:1.0px;background:#dbe8ec"></div><div style="position:absolute;left:15.4px;top:441.3px;width:540.6px;height:1.0px;background:#dbe8ec"></div><div style="position:absolute;left:15.4px;top:462.4px;width:540.6px;height:1.0px;background:#dbe8ec"></div><div style="position:absolute;left:15.4px;top:483.5px;width:540.6px;height:1.0px;background:#dbe8ec"></div><div style="position:absolute;left:15.4px;top:502.9px;width:540.6px;height:1.0px;background:#dbe8ec"></div><div style="position:absolute;left:15.4px;top:522.2px;width:540.6px;height:1.0px;background:#dbe8ec"></div><div style="position:absolute;left:15.4px;top:541.5px;width:540.6px;height:1.0px;background:#dbe8ec"></div><div style="position:absolute;left:15.4px;top:560.9px;width:540.6px;height:1.0px;background:#dbe8ec"></div><div style="position:absolute;left:15.4px;top:580.2px;width:540.6px;height:1.0px;background:#dbe8ec"></div><div style="position:absolute;left:15.4px;top:599.6px;width:540.6px;height:1.0px;background:#dbe8ec"></div><div style="position:absolute;left:15.4px;top:619.0px;width:540.6px;height:1.0px;background:#dbe8ec"></div><div style="position:absolute;left:66.9px;top:273.0px;width:1.0px;height:345.0px;background:#dbe8ec"></div><div style="position:absolute;left:189.9px;top:273.0px;width:1.0px;height:345.0px;background:#dbe8ec"></div><div style="position:absolute;left:376.2px;top:273.0px;width:1.0px;height:345.0px;background:#dbe8ec"></div><div style="position:absolute;left:507.1px;top:273.0px;width:1.0px;height:345.0px;background:#dbe8ec"></div><div style="position:absolute;left:14.4px;top:242.1px;width:2.0px;height:375.9px;background:#3c7590"></div><div style="position:absolute;left:555.0px;top:273.0px;width:2.0px;height:345.0px;background:#3c7590"></div><div style="position:absolute;left:561.3px;top:293.6px;width:326.3px;height:1.0px;background:#e6ebe2"></div><div style="position:absolute;left:561.3px;top:314.7px;width:326.3px;height:1.0px;background:#e6ebe2"></div><div style="position:absolute;left:561.3px;top:335.8px;width:326.3px;height:1.0px;background:#e6ebe2"></div><div style="position:absolute;left:561.3px;top:356.9px;width:326.3px;height:1.0px;background:#e6ebe2"></div><div style="position:absolute;left:561.3px;top:378.0px;width:326.3px;height:1.0px;background:#e6ebe2"></div><div style="position:absolute;left:561.3px;top:399.1px;width:326.3px;height:1.0px;background:#e6ebe2"></div><div style="position:absolute;left:561.3px;top:420.2px;width:326.3px;height:1.0px;background:#e6ebe2"></div><div style="position:absolute;left:561.3px;top:441.3px;width:326.3px;height:1.0px;background:#e6ebe2"></div><div style="position:absolute;left:561.3px;top:462.4px;width:326.3px;height:1.0px;background:#e6ebe2"></div><div style="position:absolute;left:561.3px;top:483.5px;width:326.3px;height:1.0px;background:#e6ebe2"></div><div style="position:absolute;left:561.3px;top:502.9px;width:326.3px;height:1.0px;background:#e6ebe2"></div><div style="position:absolute;left:561.3px;top:522.2px;width:326.3px;height:1.0px;background:#e6ebe2"></div><div style="position:absolute;left:561.3px;top:541.5px;width:326.3px;height:1.0px;background:#e6ebe2"></div><div style="position:absolute;left:561.3px;top:560.9px;width:326.3px;height:1.0px;background:#e6ebe2"></div><div style="position:absolute;left:561.3px;top:580.2px;width:326.3px;height:1.0px;background:#e6ebe2"></div><div style="position:absolute;left:561.3px;top:599.6px;width:326.3px;height:1.0px;background:#e6ebe2"></div><div style="position:absolute;left:561.3px;top:619.0px;width:326.3px;height:1.0px;background:#e6ebe2"></div><div style="position:absolute;left:633.1px;top:273.0px;width:1.0px;height:345.0px;background:#e6ebe2"></div><div style="position:absolute;left:695.9px;top:273.0px;width:1.0px;height:345.0px;background:#e6ebe2"></div><div style="position:absolute;left:759.9px;top:273.0px;width:1.0px;height:345.0px;background:#e6ebe2"></div><div style="position:absolute;left:824.4px;top:273.0px;width:1.0px;height:345.0px;background:#e6ebe2"></div><div style="position:absolute;left:560.3px;top:242.1px;width:2.0px;height:375.9px;background:#789c6a"></div><div style="position:absolute;left:886.6px;top:242.1px;width:2.0px;height:375.9px;background:#789c6a"></div><div style="position:absolute;left:560.3px;top:242.1px;width:328.3px;height:1.0px;background:#789c6a"></div><div style="position:absolute;left:892.4px;top:293.6px;width:327.6px;height:1.0px;background:#ecdeea"></div><div style="position:absolute;left:892.4px;top:314.7px;width:327.6px;height:1.0px;background:#ecdeea"></div><div style="position:absolute;left:892.4px;top:335.8px;width:327.6px;height:1.0px;background:#ecdeea"></div><div style="position:absolute;left:892.4px;top:356.9px;width:327.6px;height:1.0px;background:#ecdeea"></div><div style="position:absolute;left:892.4px;top:378.0px;width:327.6px;height:1.0px;background:#ecdeea"></div><div style="position:absolute;left:892.4px;top:399.1px;width:327.6px;height:1.0px;background:#ecdeea"></div><div style="position:absolute;left:892.4px;top:420.2px;width:327.6px;height:1.0px;background:#ecdeea"></div><div style="position:absolute;left:892.4px;top:441.3px;width:327.6px;height:1.0px;background:#ecdeea"></div><div style="position:absolute;left:892.4px;top:462.4px;width:327.6px;height:1.0px;background:#ecdeea"></div><div style="position:absolute;left:892.4px;top:483.5px;width:327.6px;height:1.0px;background:#ecdeea"></div><div style="position:absolute;left:892.4px;top:502.9px;width:327.6px;height:1.0px;background:#ecdeea"></div><div style="position:absolute;left:892.4px;top:522.2px;width:327.6px;height:1.0px;background:#ecdeea"></div><div style="position:absolute;left:892.4px;top:541.5px;width:327.6px;height:1.0px;background:#ecdeea"></div><div style="position:absolute;left:892.4px;top:560.9px;width:327.6px;height:1.0px;background:#ecdeea"></div><div style="position:absolute;left:892.4px;top:580.2px;width:327.6px;height:1.0px;background:#ecdeea"></div><div style="position:absolute;left:892.4px;top:599.6px;width:327.6px;height:1.0px;background:#ecdeea"></div><div style="position:absolute;left:892.4px;top:619.0px;width:327.6px;height:1.0px;background:#ecdeea"></div><div style="position:absolute;left:957.1px;top:273.0px;width:1.0px;height:345.0px;background:#ecdeea"></div><div style="position:absolute;left:1021.3px;top:273.0px;width:1.0px;height:345.0px;background:#ecdeea"></div><div style="position:absolute;left:1093.1px;top:273.0px;width:1.0px;height:345.0px;background:#ecdeea"></div><div style="position:absolute;left:1156.8px;top:273.0px;width:1.0px;height:345.0px;background:#ecdeea"></div><div style="position:absolute;left:891.4px;top:242.1px;width:2.0px;height:375.9px;background:#4a1c4a"></div><div style="position:absolute;left:891.4px;top:242.1px;width:329.6px;height:1.0px;background:#4a1c4a"></div>
</div></body></html>
